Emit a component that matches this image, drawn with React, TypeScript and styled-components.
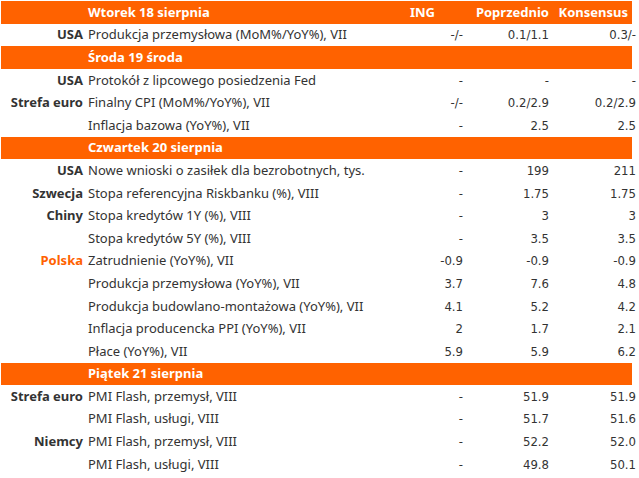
import React from "react";
import styled, { createGlobalStyle } from "styled-components";

const GlobalStyle = createGlobalStyle`
  html, body { margin: 0; padding: 0; background: #ffffff; }
  body { font-family: "Noto Sans", "Open Sans", sans-serif; color: #333333; }
`;

const ORANGE = "#ff6200";

const Table = styled.div`
  width: 636px;
  display: flex;
  flex-direction: column;
  padding-top: 1px;
`;

const Row = styled.div`
  display: grid;
  grid-template-columns: 85px 300px 78px 86px 87px;
  height: 22.6px;
  align-items: center;
  font-size: 13px;
  line-height: 1;
  white-space: nowrap;
`;

const HeaderRow = styled(Row)`
  background: linear-gradient(
    90deg,
    transparent 0 1px,
    ${ORANGE} 1px 632px,
    transparent 632px
  );
  color: #ffffff;
  font-weight: 700;
  font-size: 13px;
`;

const Country = styled.div<{ $accent?: boolean }>`
  text-align: right;
  padding-right: 2px;
  font-weight: 700;
  color: ${(p) => (p.$accent ? ORANGE : "#333333")};
`;

const Desc = styled.div`
  padding-left: 3px;
`;

const Title = styled.div`
  padding-left: 3px;
`;

const HeadCell = styled.div<{ $pr: number }>`
  text-align: right;
  padding-right: ${(p) => p.$pr}px;
`;

const Num = styled.div`
  text-align: right;
  font-family: "DejaVu Sans Condensed", "DejaVu Sans", sans-serif;
  font-size: 13px;
  color: #333333;
`;

type Item = {
  country?: string;
  accent?: boolean;
  desc: string;
  ing: string;
  prev: string;
  cons: string;
};

type Section = { title: string; items: Item[] };

const sections: Section[] = [
  {
    title: "Wtorek 18 sierpnia",
    items: [
      { country: "USA", desc: "Produkcja przemysłowa (MoM%/YoY%), VII", ing: "-/-", prev: "0.1/1.1", cons: "0.3/-" },
    ],
  },
  {
    title: "Środa 19 środa",
    items: [
      { country: "USA", desc: "Protokół z lipcowego posiedzenia Fed", ing: "-", prev: "-", cons: "-" },
      { country: "Strefa euro", desc: "Finalny CPI (MoM%/YoY%), VII", ing: "-/-", prev: "0.2/2.9", cons: "0.2/2.9" },
      { desc: "Inflacja bazowa (YoY%), VII", ing: "-", prev: "2.5", cons: "2.5" },
    ],
  },
  {
    title: "Czwartek 20 sierpnia",
    items: [
      { country: "USA", desc: "Nowe wnioski o zasiłek dla bezrobotnych, tys.", ing: "-", prev: "199", cons: "211" },
      { country: "Szwecja", desc: "Stopa referencyjna Riskbanku (%), VIII", ing: "-", prev: "1.75", cons: "1.75" },
      { country: "Chiny", desc: "Stopa kredytów 1Y (%), VIII", ing: "-", prev: "3", cons: "3" },
      { desc: "Stopa kredytów 5Y (%), VIII", ing: "-", prev: "3.5", cons: "3.5" },
      { country: "Polska", accent: true, desc: "Zatrudnienie (YoY%), VII", ing: "-0.9", prev: "-0.9", cons: "-0.9" },
      { desc: "Produkcja przemysłowa (YoY%), VII", ing: "3.7", prev: "7.6", cons: "4.8" },
      { desc: "Produkcja budowlano-montażowa (YoY%), VII", ing: "4.1", prev: "5.2", cons: "4.2" },
      { desc: "Inflacja producencka PPI (YoY%), VII", ing: "2", prev: "1.7", cons: "2.1" },
      { desc: "Płace (YoY%), VII", ing: "5.9", prev: "5.9", cons: "6.2" },
    ],
  },
  {
    title: "Piątek 21 sierpnia",
    items: [
      { country: "Strefa euro", desc: "PMI Flash, przemysł, VIII", ing: "-", prev: "51.9", cons: "51.9" },
      { desc: "PMI Flash, usługi, VIII", ing: "-", prev: "51.7", cons: "51.6" },
      { country: "Niemcy", desc: "PMI Flash, przemysł, VIII", ing: "-", prev: "52.2", cons: "52.0" },
      { desc: "PMI Flash, usługi, VIII", ing: "-", prev: "49.8", cons: "50.1" },
    ],
  },
];

export default function App() {
  return (
    <>
      <GlobalStyle />
      <Table>
        {sections.map((s, si) => (
          <React.Fragment key={s.title}>
            <HeaderRow>
              <span />
              <Title>{s.title}</Title>
              {si === 0 ? (
                <>
                  <HeadCell $pr={28}>ING</HeadCell>
                  <HeadCell $pr={0}>Poprzednio</HeadCell>
                  <HeadCell $pr={8}>Konsensus</HeadCell>
                </>
              ) : null}
            </HeaderRow>
            {s.items.map((it, i) => (
              <Row key={i}>
                <Country $accent={it.accent}>{it.country ?? ""}</Country>
                <Desc>{it.desc}</Desc>
                <Num>{it.ing}</Num>
                <Num>{it.prev}</Num>
                <Num>{it.cons}</Num>
              </Row>
            ))}
          </React.Fragment>
        ))}
      </Table>
    </>
  );
}
